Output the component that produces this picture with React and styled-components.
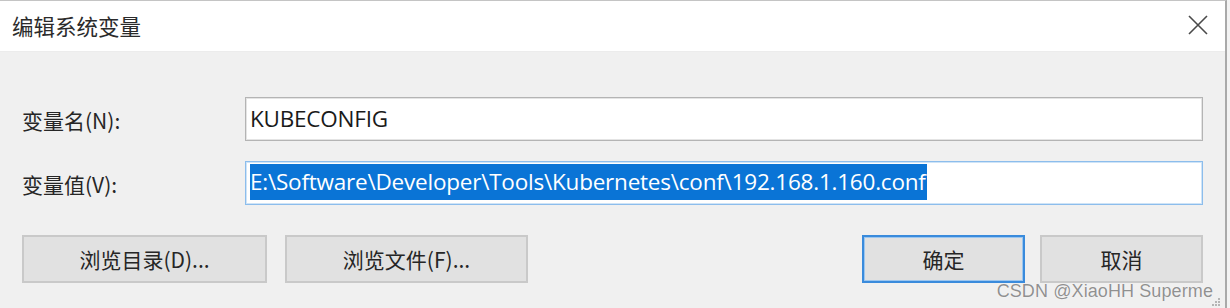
import React from "react";
import styled, { createGlobalStyle } from "styled-components";

const GlobalStyle = createGlobalStyle`
  html, body {
    margin: 0;
    padding: 0;
    background: #f3f3f3;
  }
  body {
    font-family: "Noto Sans", "Noto Sans CJK SC", sans-serif;
    color: #1e1e1e;
  }
`;

const Window = styled.div`
  position: relative;
  width: 1227px;
  height: 308px;
  display: flex;
  flex-direction: column;
  border-top: 1px solid #c4c4c4;
  border-right: 2px solid #a9a9a9;
  box-sizing: border-box;
  background: #f0f0f0;
  overflow: hidden;
`;

const TitleBar = styled.div`
  height: 50px;
  flex: none;
  display: flex;
  align-items: center;
  justify-content: space-between;
  padding: 0 16px 0 12px;
  background: #ffffff;
  border-bottom: 1px solid #ececec;
`;

const Title = styled.div`
  font-family: "Noto Sans CJK SC", sans-serif;
  font-size: 21.5px;
  color: #2b2b2b;
  margin-top: -2px;
`;

const CloseButton = styled.div`
  width: 22px;
  height: 22px;
  display: flex;
  align-items: center;
  justify-content: center;
  margin-top: -2px;
`;

const Body = styled.div`
  flex: 1;
  display: flex;
  flex-direction: column;
  padding: 45px 22px 0 22px;
  gap: 30px;
`;

const Fields = styled.div`
  display: grid;
  grid-template-columns: 223px 1fr;
  row-gap: 20px;
  align-items: center;
`;

const Label = styled.label`
  font-family: "Noto Sans CJK SC", sans-serif;
  font-size: 21px;
  color: #262626;
  padding-top: 1px;
`;

const Input = styled.div`
  height: 44px;
  box-sizing: border-box;
  display: flex;
  align-items: center;
  padding: 0 4px 2px 4px;
  background: #ffffff;
  border: 1px solid ${({ $focused }) => ($focused ? "#8cbdec" : "#b4b4b4")};
  box-shadow: ${({ $focused }) =>
    $focused ? "inset 0 0 0 1px #cfe4f7" : "inset 0 0 0 1px #e4e4e4"};
  font-family: "Open Sans", "Noto Sans", sans-serif;
  font-size: 22.5px;
  letter-spacing: -0.22px;
  color: #1a1a1a;
  white-space: nowrap;
  overflow: hidden;
`;

const Selected = styled.span`
  display: inline-block;
  background: #0a74d6;
  color: #ffffff;
  line-height: 36px;
  padding-right: 1px;
`;

const ButtonRow = styled.div`
  display: flex;
  align-items: center;
  gap: 18px;
`;

const Button = styled.div`
  width: ${({ $w }) => $w}px;
  height: 48px;
  box-sizing: border-box;
  display: flex;
  align-items: center;
  justify-content: center;
  background: #e1e1e1;
  border: ${({ $primary }) =>
    $primary ? "2px solid #3a8bdc" : "2px solid #c9c9c9"};
  box-shadow: ${({ $primary }) =>
    $primary ? "inset 0 0 0 1px #9cc6ef" : "none"};
  font-family: "Noto Sans CJK SC", sans-serif;
  font-size: 21px;
  color: #262626;
`;

const Spacer = styled.div`
  flex: 1;
`;

const RightButtons = styled.div`
  display: flex;
  gap: 15px;
`;

const Watermark = styled.div`
  position: absolute;
  right: 12px;
  bottom: 6px;
  font-family: "Liberation Sans", Arial, sans-serif;
  font-size: 18px;
  color: rgba(125, 125, 125, 0.85);
  text-shadow: 0 0 1px rgba(255, 255, 255, 0.9);
  letter-spacing: 0.1px;
`;

const Grip = styled.svg`
  position: absolute;
  right: 5px;
  bottom: 2px;
`;

const App = () => (
  <>
    <GlobalStyle />
    <Window>
      <TitleBar>
        <Title>编辑系统变量</Title>
        <CloseButton>
          <svg width="20" height="20" viewBox="0 0 20 20">
            <path
              d="M1 1 L19 19 M19 1 L1 19"
              stroke="#4a4a4a"
              strokeWidth="1.6"
              fill="none"
            />
          </svg>
        </CloseButton>
      </TitleBar>
      <Body>
        <Fields>
          <Label>变量名(N):</Label>
          <Input>KUBECONFIG</Input>
          <Label>变量值(V):</Label>
          <Input $focused>
            <Selected>
              E:\Software\Developer\Tools\Kubernetes\conf\192.168.1.160.conf
            </Selected>
          </Input>
        </Fields>
        <ButtonRow>
          <Button $w={245}>浏览目录(D)...</Button>
          <Button $w={243}>浏览文件(F)...</Button>
          <Spacer />
          <RightButtons>
            <Button $w={163} $primary>
              确定
            </Button>
            <Button $w={163}>取消</Button>
          </RightButtons>
        </ButtonRow>
      </Body>
      <Watermark>CSDN @XiaoHH Superme</Watermark>
      <Grip width="9" height="9" viewBox="0 0 9 9">
        <rect x="7" y="1" width="2" height="2" fill="#b5b5b5" />
        <rect x="4" y="4" width="2" height="2" fill="#b5b5b5" />
        <rect x="7" y="4" width="2" height="2" fill="#b5b5b5" />
        <rect x="1" y="7" width="2" height="2" fill="#b5b5b5" />
        <rect x="4" y="7" width="2" height="2" fill="#b5b5b5" />
        <rect x="7" y="7" width="2" height="2" fill="#b5b5b5" />
      </Grip>
    </Window>
  </>
);

export default App;
